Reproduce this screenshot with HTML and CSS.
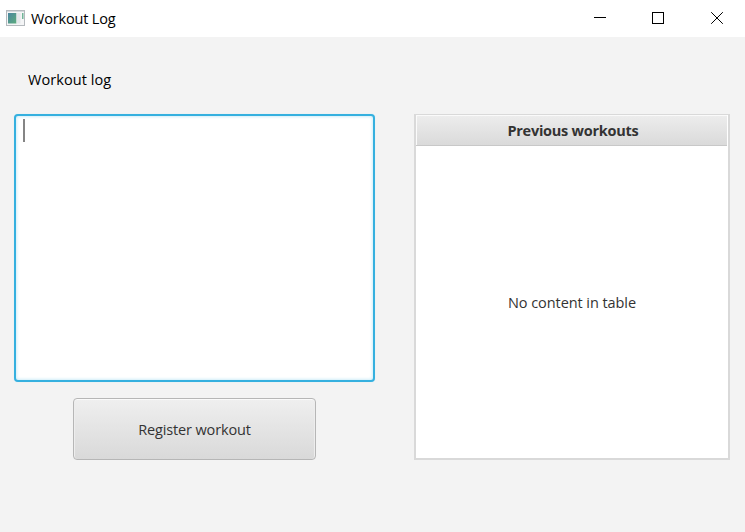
FILE: index.html
```html
<!DOCTYPE html>
<html lang="en">
<head>
<meta charset="utf-8">
<title>Workout Log</title>
<link rel="stylesheet" href="styles.css">
</head>
<body>
<header class="titlebar">
  <svg class="app-icon" width="19" height="16" viewBox="0 0 19 16">
    <defs><linearGradient id="g" x1="0" y1="0" x2="1" y2="1"><stop offset="0" stop-color="#4a86a0"/><stop offset="1" stop-color="#5cac7c"/></linearGradient></defs>
    <rect x=".5" y=".5" width="18" height="15" fill="#f4f5f6" stroke="#b4b9bd"/>
    <path d="M1 1.500h17" stroke="#d3d8dc"/>
    <rect x="2" y="3" width="8.500" height="10.500" fill="url(#g)"/>
    <rect x="10.500" y="3" width="4" height="10.500" fill="#e4e7ea"/>
    <rect x="16" y="3" width="1.500" height="6" fill="#70b598"/>
  </svg>
  <span class="title">Workout Log</span>
  <svg class="controls" width="130" height="12" viewBox="0 0 130 12" fill="none" stroke="#000">
    <path d="M0 5.500h12"/>
    <rect x="58.500" y=".5" width="11" height="11"/>
    <path d="M117.200.2l11.600 11.600M128.800.2l-11.600 11.600"/>
  </svg>
</header>
<main class="content">
  <section class="entry">
    <div class="label"><span class="label-text">Workout log</span></div>
    <div class="textarea"><span class="caret"></span></div>
    <button class="register"><span class="register-text">Register workout</span></button>
  </section>
  <section class="table">
    <div class="table-head"><span class="head-text">Previous workouts</span></div>
    <div class="table-body"><span class="empty-text">No content in table</span></div>
  </section>
</main>
</body>
</html>
```
FILE: styles.css
```css
* { box-sizing: border-box; }
body {
  margin: 0;
  height: 532px;
  overflow: hidden;
  background: #f3f3f3;
  color: #333;
  font: 15px/20px "Open Sans", "Noto Sans", sans-serif;
  white-space: nowrap;
}
.titlebar {
  display: flex;
  align-items: center;
  height: 37px;
  padding: 0 21px 1px 6px;
  background: #fff;
  color: #000;
}
.app-icon { margin-right: 6px; }
.title { font-size: 14.5px; letter-spacing: -0.18px; padding-top: 2px; }
.controls { margin-left: auto; }
.content {
  display: flex;
  justify-content: space-between;
  padding: 32px 15px 0 14px;
}
.entry { width: 361px; }
.label { height: 45px; padding-left: 14px; color: #000; }
.label-text { font-size: 14.5px; letter-spacing: 0.07px; }
.textarea {
  height: 268px;
  padding: 5px 0 0 7px;
  background: #fff;
  border: 2px solid #35b0df;
  border-radius: 4px;
  box-shadow: inset 0 0 3px 1px #cfedf8, 0 0 1px #b5e4f5;
}
.caret { display: block; width: 2px; height: 23px; margin-top: -2px; background: #858585; }
.register {
  display: flex;
  align-items: center;
  justify-content: center;
  width: 243px;
  height: 62px;
  margin: 16px 0 0 59px;
  padding: 0;
  border: 1px solid #b6b6b6;
  border-radius: 4px;
  background: linear-gradient(#efefef, #d9d9d9);
  box-shadow: inset 0 1px #fafafa, inset 1px 0 #ededed, inset -1px 0 #ededed;
  color: #333;
  font: inherit;
}
.register-text { font-size: 14.5px; letter-spacing: -0.13px; padding-top: 2px; }
.table {
  display: flex;
  flex-direction: column;
  width: 316px;
  height: 346px;
  margin-top: 45px;
  border: 2px solid #d9d9d9;
  border-top-width: 1px;
  background: #fff;
}
.table-head {
  height: 31px;
  margin-right: 1px;
  padding: 5px 0 0 3px;
  text-align: center;
  background: linear-gradient(#ededed, #dadada);
  border-bottom: 1px solid #c8c8c8;
  box-shadow: inset 1px 1px #fafafa;
}
.head-text { font-size: 14.5px; font-weight: 700; letter-spacing: -0.25px; }
.table-body { flex: 1; display: flex; align-items: center; justify-content: center; }
.empty-text { font-size: 14.5px; letter-spacing: -0.07px; padding-top: 2px; }
```
